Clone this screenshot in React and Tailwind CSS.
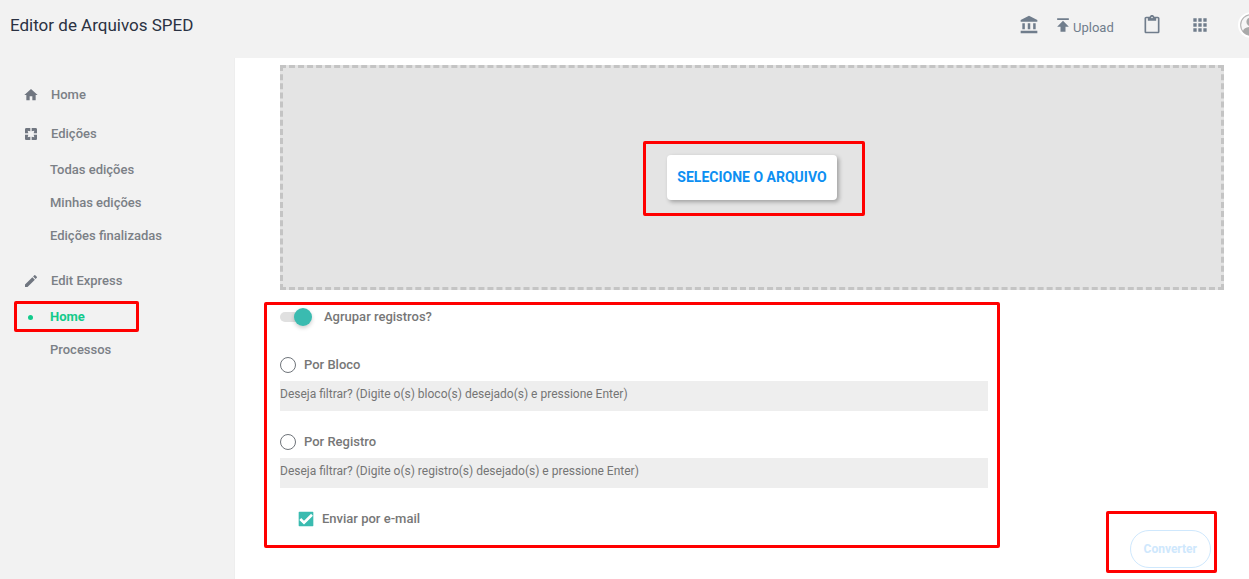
import React, { useState } from 'react';
import {
  MdAccountBalance,
  MdApps,
  MdCheck,
  MdContentPaste,
  MdEdit,
  MdHome,
  MdPages,
  MdPublish,
} from 'react-icons/md';

const menu = [
  { label: 'Home', icon: MdHome, items: [] },
  {
    label: 'Edições',
    icon: MdPages,
    items: [{ label: 'Todas edições' }, { label: 'Minhas edições' }, { label: 'Edições finalizadas' }],
  },
  {
    label: 'Edit Express',
    icon: MdEdit,
    items: [{ label: 'Home', active: true }, { label: 'Processos' }],
  },
];

// Red frame drawn over the parts of the page that need attention
const Highlight = ({ className }) => (
  <span aria-hidden="true" className={`pointer-events-none absolute rounded-xs border-3 border-[#ff0000] ${className}`} />
);

const Header = () => (
  <header className="flex h-[58px] items-start justify-between overflow-hidden pl-2.5">
    <h1 className="pt-[13px] text-[17px] leading-6 text-[#2a3142]">Editor de Arquivos SPED</h1>
    <div className="-mr-[15px] flex h-[50px] items-center gap-7 text-[#707d8c]">
      <div className="flex items-center gap-3.5">
        <a href="#banco" aria-label="Banco">
          <MdAccountBalance size={20} />
        </a>
        <a href="#upload" className="flex w-[61px] items-center text-[13px]">
          <MdPublish size={20} className="shrink-0" />
          <span className="pt-1.5">Upload</span>
        </a>
      </div>
      <a href="#tarefas" aria-label="Tarefas">
        <MdContentPaste size={20} />
      </a>
      <button type="button" aria-label="Aplicativos">
        <MdApps size={20} />
      </button>
      <button type="button" aria-label="Perfil" className="rounded-full bg-white p-0.5">
        <svg viewBox="0 0 24 24" className="size-[22px]">
          <circle cx="12" cy="12" r="11.3" fill="#f7f7f7" stroke="#b5b5b5" strokeWidth="1.2" />
          <circle cx="12" cy="8.5" r="5" fill="#a9a9a9" />
          <path d="M3 19c1-4 5-5 9-5s8 1 9 5c-2.200 2.800-5.500 4.300-9 4.300S5.200 21.800 3 19z" fill="#a9a9a9" />
        </svg>
      </button>
    </div>
  </header>
);

const Sidebar = () => (
  <nav className="w-[235px] shrink-0 border-r border-[#eeeeee] pt-[17px] text-[13px] font-medium text-[#7b8086]">
    <ul>
      {menu.map(({ label, icon: Icon, items }) => (
        <li key={label} className={items.length ? 'pb-[9px]' : ''}>
          <a href="#menu" className="flex h-[39px] items-center gap-3 pl-[23px]">
            <Icon size={16} className="text-[#707680]" />
            {label}
          </a>
          {items.length > 0 && (
            <ul>
              {items.map((item) => (
                <li key={item.label} className="relative">
                  <a
                    href="#menu"
                    className={`flex h-[33px] items-center ${item.active ? 'gap-[17px] pl-7 font-bold text-[#12ca8b]' : 'pl-[50px]'}`}
                  >
                    {item.active && <span className="mt-0.5 size-[5px] rounded-full bg-[#12ca8b]" />}
                    {item.label}
                  </a>
                  {item.active && <Highlight className="inset-y-px left-3.5 w-[125px]" />}
                </li>
              ))}
            </ul>
          )}
        </li>
      ))}
    </ul>
  </nav>
);

const FilterOption = ({ id, label, placeholder, checked, onChange }) => (
  <div>
    <label htmlFor={id} className="flex h-[18px] items-center gap-2">
      <input
        id={id}
        type="radio"
        name="agrupamento"
        checked={checked}
        onChange={onChange}
        className="size-4 appearance-none rounded-full border border-[#6f747a] checked:border-4 checked:border-[#3abbb0]"
      />
      {label}
    </label>
    <input
      type="text"
      aria-label={`Filtro ${label}`}
      placeholder={placeholder}
      className="mt-[7px] block h-[30px] w-full bg-[#eeeeee] pb-1 text-[12px] font-normal outline-none placeholder:text-[#757575]"
    />
  </div>
);

const App = () => {
  const [grouped, setGrouped] = useState(true);
  const [groupBy, setGroupBy] = useState('');
  const [sendMail, setSendMail] = useState(true);

  return (
    <div className="flex min-h-screen flex-col bg-[#f2f2f2] font-[Roboto,sans-serif]">
      <Header />
      <div className="flex grow">
        <Sidebar />
        <main className="grow bg-white pt-[7px] pr-[25px] pb-2.5 pl-[45px]">
          <div className="flex h-[225px] items-center justify-center border-3 border-dashed border-[#c4c4c4] bg-[#e4e4e4]">
            <div className="relative">
              <button
                type="button"
                className="h-[45px] rounded bg-white px-2.5 text-[14px] font-bold text-[#0d8ff2] shadow-[2px_2px_4px_rgba(0,0,0,0.3)]"
              >
                SELECIONE O ARQUIVO
              </button>
              <Highlight className="-top-3.5 -right-7 -bottom-4 -left-6" />
            </div>
          </div>

          <div className="flex items-end justify-between pt-3">
            <form className="relative mb-5 w-3/4 pt-1.5 pb-5 text-[13px] font-medium text-[#777777]">
              <label htmlFor="agrupar" className="flex h-[18px] items-center gap-3">
                <span className="relative flex h-[18px] w-8 items-center">
                  <input
                    id="agrupar"
                    type="checkbox"
                    role="switch"
                    checked={grouped}
                    onChange={() => setGrouped(!grouped)}
                    className="h-2.5 w-7 appearance-none rounded-full bg-[#e0e0e0]"
                  />
                  <span
                    className={`pointer-events-none absolute size-[18px] rounded-full shadow-[0_2px_4px_rgba(0,0,0,0.2)] ${grouped ? 'right-0 bg-[#3abbb0]' : 'left-0 bg-white'}`}
                  />
                </span>
                Agrupar registros?
              </label>

              <div className="flex flex-col gap-[22px] pt-[30px]">
                <FilterOption
                  id="por-bloco"
                  label="Por Bloco"
                  placeholder="Deseja filtrar? (Digite o(s) bloco(s) desejado(s) e pressione Enter)"
                  checked={groupBy === 'bloco'}
                  onChange={() => setGroupBy('bloco')}
                />
                <FilterOption
                  id="por-registro"
                  label="Por Registro"
                  placeholder="Deseja filtrar? (Digite o(s) registro(s) desejado(s) e pressione Enter)"
                  checked={groupBy === 'registro'}
                  onChange={() => setGroupBy('registro')}
                />
                <label htmlFor="email" className="flex h-[18px] items-center gap-2 pl-[18px]">
                  <span className="relative flex">
                    <input
                      id="email"
                      type="checkbox"
                      checked={sendMail}
                      onChange={() => setSendMail(!sendMail)}
                      className="size-4 appearance-none rounded-xs border border-[#3abbb0] checked:bg-[#3abbb0]"
                    />
                    {sendMail && (
                      <MdCheck size={16} className="pointer-events-none absolute inset-0 stroke-white stroke-2 text-white" />
                    )}
                  </span>
                  Enviar por e-mail
                </label>
              </div>
              <Highlight className="inset-y-0 -right-3 -left-4" />
            </form>

            <div className="relative mr-[13px]">
              <button
                type="button"
                disabled
                className="h-[38px] rounded-full border border-[#cfe8fd] px-[13px] text-[12px] font-bold text-[#cfe8fd]"
              >
                Converter
              </button>
              <Highlight className="-top-[19px] -right-1.5 -bottom-[5px] -left-6" />
            </div>
          </div>
        </main>
      </div>
    </div>
  );
};

export default App;
